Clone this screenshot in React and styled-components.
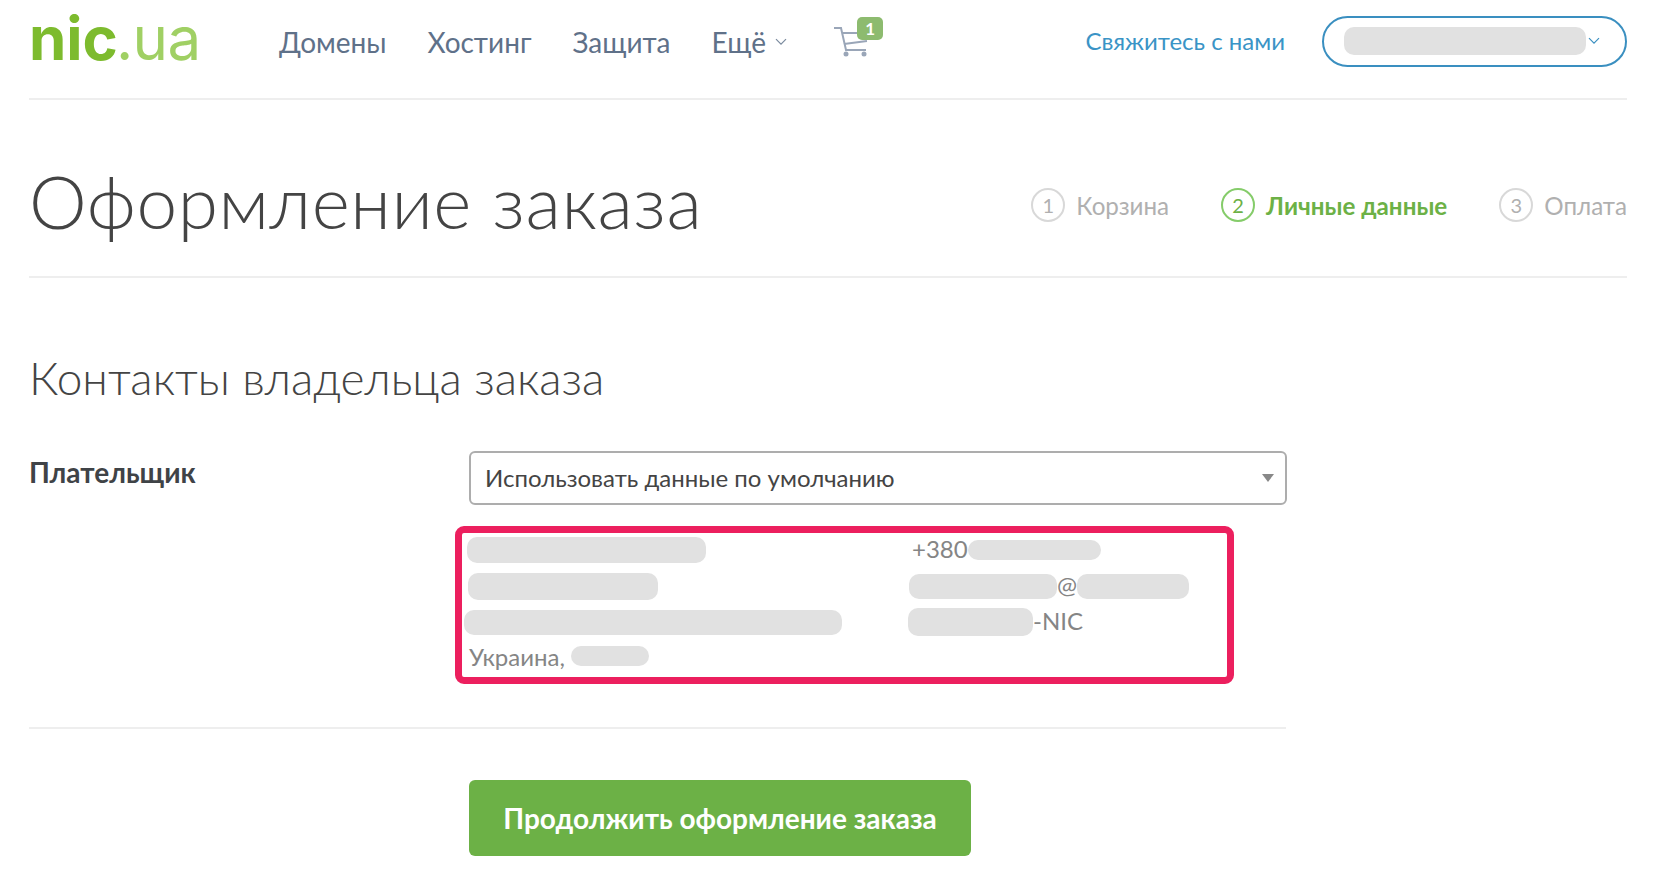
import React from 'react'
import styled, { createGlobalStyle } from 'styled-components'

const GlobalStyle = createGlobalStyle`
  html, body { margin: 0; padding: 0; background: #fff; }
  body { font-family: Lato, "Open Sans", sans-serif; }
`

const Page = styled.div`
  width: 1654px;
  height: 880px;
  box-sizing: border-box;
  padding: 0 27px 0 29px;
  overflow: hidden;
`

const Header = styled.header`
  height: 82px;
  padding-bottom: 16px;
  display: flex;
  align-items: center;
  border-bottom: 2px solid #eeeeee;
`

const Logo = styled.div`
  width: 250px;
  font-family: Inter, sans-serif;
  font-size: 60px;
  line-height: 60px;
  letter-spacing: 0;
  font-weight: 700;
  color: #7dbb2e;
  margin-top: -6px;

  span {
    font-weight: 400;
    color: #a0d064;
    margin-left: -2px;
    letter-spacing: -0.6px;
  }
`

const Nav = styled.nav`
  display: flex;
  align-items: center;
  gap: 41px;
  flex: 1;
  margin-top: 2px;
`

const NavLink = styled.a`
  font-size: 28px;
  color: #5f7189;
  display: flex;
  align-items: center;
  gap: 9px;
`

const CartWrap = styled.div`
  position: relative;
  width: 40px;
  height: 36px;
  margin-left: 5px;
`

const CartBadge = styled.span`
  position: absolute;
  left: 24px;
  top: -7px;
  width: 26px;
  height: 23px;
  border-radius: 5px;
  background: #8dbb6f;
  color: #fff;
  font-size: 17px;
  font-weight: 700;
  text-align: center;
  line-height: 23px;
`

const ContactLink = styled.a`
  font-size: 24px;
  color: #3a94c6;
  margin: 0 37px 2px 0;
`

const AccountPill = styled.div`
  width: 305px;
  height: 51px;
  box-sizing: border-box;
  border: 2px solid #3a8fc0;
  border-radius: 26px;
  display: flex;
  align-items: center;
  padding-left: 20px;
  gap: 2px;
`

const Blur = styled.span`
  display: inline-block;
  flex: none;
  vertical-align: middle;
  width: ${p => p.$w}px;
  height: ${p => p.$h}px;
  border-radius: 10px;
  background: #e1e1e1;
`

const TitleRow = styled.div`
  height: 178px;
  padding-top: 34px;
  box-sizing: border-box;
  border-bottom: 2px solid #eeeeee;
  display: flex;
  align-items: center;
  justify-content: space-between;
`

const Title = styled.h1`
  margin: 0 0 8px;
  font-size: 73px;
  font-weight: 300;
  color: #444444;
  letter-spacing: 0.55px;
`

const Steps = styled.div`
  display: flex;
  gap: 52px;
`

const Step = styled.div`
  display: flex;
  align-items: center;
  gap: 11px;
  font-size: 24.2px;
  font-weight: ${p => (p.$active ? 700 : 400)};
  color: ${p => (p.$active ? '#6cb146' : '#b0b0b0')};
`

const StepNum = styled.span`
  width: 34px;
  height: 34px;
  box-sizing: border-box;
  border-radius: 50%;
  border: 2px solid ${p => (p.$active ? '#85cc6a' : '#d8d8d8')};
  color: ${p => (p.$active ? '#6cb146' : '#b0b0b0')};
  font-size: 20px;
  font-weight: 400;
  display: flex;
  align-items: center;
  justify-content: center;
`

const Section = styled.section`
  width: 1257px;
`

const SectionTitle = styled.h2`
  margin: 73px 0 0;
  font-size: 46px;
  line-height: 54px;
  font-weight: 300;
  color: #444444;
`

const FormRow = styled.div`
  margin-top: 46px;
  display: grid;
  grid-template-columns: 440px 818px;
`

const Label = styled.div`
  font-size: 28px;
  font-weight: 700;
  color: #3f4347;
  line-height: 42px;
`

const Select = styled.div`
  height: 54px;
  box-sizing: border-box;
  border: 2px solid #adadad;
  border-radius: 6px;
  display: flex;
  align-items: center;
  justify-content: space-between;
  padding: 0 11px 2px 14px;
  font-size: 24px;
  color: #444444;

  &::after {
    content: '';
    margin-top: 2px;
    border-left: 6px solid transparent;
    border-right: 6px solid transparent;
    border-top: 8px solid #888888;
  }
`

const InfoBox = styled.div`
  margin: 21px 0 0 -14px;
  width: 779px;
  height: 158px;
  box-sizing: border-box;
  border: 7px solid #ec1f5e;
  border-radius: 9px;
  padding-left: 7px;
  font-size: 24px;
  color: #858585;
`

const InfoGrid = styled.div`
  margin-top: -1px;
  display: grid;
  grid-template-columns: 442px 1fr;
  grid-auto-rows: 36px;
  align-items: center;
`

const InfoCell = styled.div`
  display: flex;
  align-items: center;
  margin-left: ${p => p.$shift || 0}px;
  padding-bottom: ${p => (p.$raised ? 4 : 0)}px;
`

const InfoText = styled.span`
  margin-bottom: 4px;
`

const Divider = styled.hr`
  margin: 43px 0 0;
  border: 0;
  border-top: 2px solid #eeeeee;
`

const SubmitRow = styled.div`
  margin-top: 51px;
  padding-left: 440px;
`

const SubmitButton = styled.button`
  width: 502px;
  height: 76px;
  border: 0;
  border-radius: 6px;
  background: #6cb146;
  color: #fff;
  font-family: inherit;
  font-size: 28px;
  font-weight: 700;
`

const Chevron = ({ color, size = 12 }) => (
  <svg width={size} height={size * 0.6} viewBox="0 0 12 7" fill="none">
    <path d="M1 1l5 5 5-5" stroke={color} strokeWidth="1.2" />
  </svg>
)

const CartIcon = () => (
  <svg width="38" height="34" viewBox="0 0 38 34" fill="none" stroke="#9aa6b8" strokeWidth="2">
    <path d="M1 4h7l5 22h20" />
    <path d="M9 9h17M11 20l23-3" />
    <circle cx="13" cy="30" r="2.5" fill="#9aa6b8" stroke="none" />
    <circle cx="31" cy="30" r="2.5" fill="#9aa6b8" stroke="none" />
  </svg>
)

const App = () => (
  <Page>
    <GlobalStyle />
    <Header>
      <Logo>nic<span>.ua</span></Logo>
      <Nav>
        <NavLink>Домены</NavLink>
        <NavLink>Хостинг</NavLink>
        <NavLink>Защита</NavLink>
        <NavLink>Ещё <Chevron color="#7a8a9e" /></NavLink>
        <CartWrap>
          <CartIcon />
          <CartBadge>1</CartBadge>
        </CartWrap>
      </Nav>
      <ContactLink>Свяжитесь с нами</ContactLink>
      <AccountPill>
        <Blur $w={242} $h={28} />
        <Chevron color="#3a8fc0" />
      </AccountPill>
    </Header>

    <TitleRow>
      <Title>Оформление заказа</Title>
      <Steps>
        <Step><StepNum>1</StepNum>Корзина</Step>
        <Step $active><StepNum $active>2</StepNum>Личные данные</Step>
        <Step><StepNum>3</StepNum>Оплата</Step>
      </Steps>
    </TitleRow>

    <Section>
      <SectionTitle>Контакты владельца заказа</SectionTitle>
      <FormRow>
        <Label>Плательщик</Label>
        <div>
          <Select>Использовать данные по умолчанию</Select>
          <InfoBox>
            <InfoGrid>
              <InfoCell $shift={-2}><Blur $w={239} $h={26} /></InfoCell>
              <InfoCell $shift={1}><InfoText>+380</InfoText><Blur $w={133} $h={20} /></InfoCell>
              <InfoCell $shift={-1}><Blur $w={190} $h={27} /></InfoCell>
              <InfoCell $shift={-2}>
                <Blur $w={148} $h={25} />
                <InfoText>@</InfoText>
                <Blur $w={112} $h={25} />
              </InfoCell>
              <InfoCell $shift={-5}><Blur $w={378} $h={25} /></InfoCell>
              <InfoCell $shift={-3}><Blur $w={125} $h={28} /><InfoText>-NIC</InfoText></InfoCell>
              <InfoCell $raised>Украина,&nbsp;<Blur $w={78} $h={20} /></InfoCell>
            </InfoGrid>
          </InfoBox>
        </div>
      </FormRow>
      <Divider />
      <SubmitRow>
        <SubmitButton>Продолжить оформление заказа</SubmitButton>
      </SubmitRow>
    </Section>
  </Page>
)

export default App
